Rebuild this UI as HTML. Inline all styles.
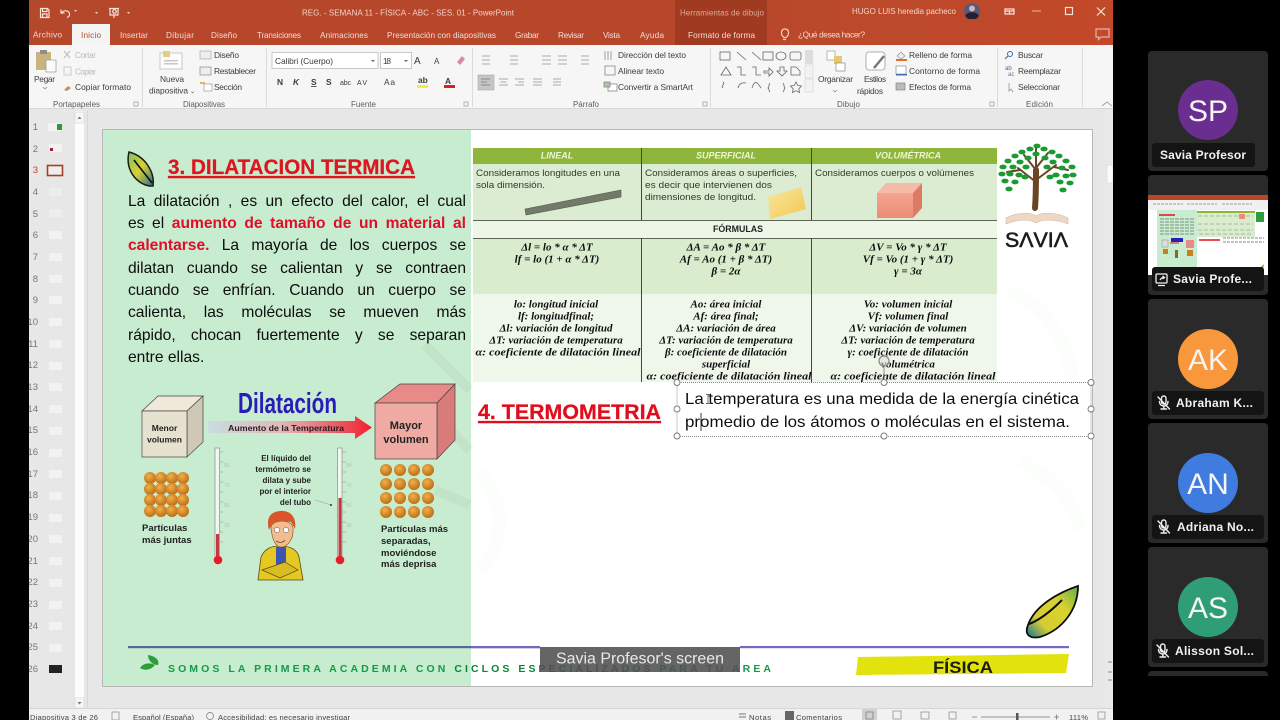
<!DOCTYPE html>
<html lang="es"><head><meta charset="utf-8"><title>PowerPoint - Savia</title>
<style>
html,body{margin:0;padding:0;background:#000;width:1280px;height:720px;overflow:hidden}
svg{display:block;position:absolute;left:0;top:0}
text{font-family:"Liberation Sans",sans-serif}
.tb{font-size:8px;fill:#f3d3c7}
.tab{font-size:8.2px;fill:#f6dcd3}
.r{font-size:8.4px;fill:#3c3c3c}
.g{font-size:8.2px;fill:#bbb}
.lb{font-size:8px;fill:#5c5c5c}
.n{font-size:9.5px;fill:#777;text-anchor:end}
.c{font-size:9.6px;fill:#2c3a2c}
.fx{font-family:"Liberation Serif",serif;font-size:11px;font-weight:bold;font-style:italic;fill:#111;text-anchor:middle}
.h{font-size:9px;font-weight:bold;font-style:italic;fill:#eef5d8;text-anchor:middle}
.b{font-weight:bold;fill:#222}
.st{font-size:7.6px;fill:#444}
.nm{font-size:12px;font-weight:bold;fill:#f1f1f1}
.ini{font-size:30px;fill:#f5f5f5;text-anchor:middle}
.ln{position:absolute;left:0;width:338px;height:22px;font:15.6px/22px "Liberation Sans",sans-serif;color:#0c0c0c;text-align:justify;text-align-last:justify;white-space:nowrap}
.ln b{color:#e0102a}
</style></head><body>
<svg width="1280" height="720" viewBox="0 0 1280 720" xmlns="http://www.w3.org/2000/svg">
<defs>
<filter id="bl" filterUnits="userSpaceOnUse" x="0" y="0" width="1130" height="720"><feGaussianBlur stdDeviation="0.28"/></filter>
<linearGradient id="tit" x1="0" x2="1"><stop offset="0" stop-color="#b5462a"/><stop offset=".62" stop-color="#b7472a"/><stop offset="1" stop-color="#c24a2c"/></linearGradient>
<linearGradient id="arr" x1="0" x2="1"><stop offset="0" stop-color="#c9dde0"/><stop offset=".45" stop-color="#e0b8b8"/><stop offset="1" stop-color="#f31f2f"/></linearGradient>
<linearGradient id="lf" x1="0" y1="0" x2="1" y2="1"><stop offset="0" stop-color="#7cc06a"/><stop offset=".5" stop-color="#d8d033"/><stop offset="1" stop-color="#1f6d9a"/></linearGradient>
<linearGradient id="lf2" x1="1" y1="0" x2="0" y2="1"><stop offset="0" stop-color="#5fae4c"/><stop offset=".35" stop-color="#d9d32e"/><stop offset=".72" stop-color="#d5cc30"/><stop offset="1" stop-color="#14709c"/></linearGradient>
<radialGradient id="ball" cx=".4" cy=".35" r=".7"><stop offset="0" stop-color="#f2b04a"/><stop offset="1" stop-color="#b86a12"/></radialGradient>
<linearGradient id="box" x1="0" y1="0" x2="0" y2="1"><stop offset="0" stop-color="#f2a68f"/><stop offset="1" stop-color="#ee8b78"/></linearGradient>
<linearGradient id="yl" x1="0" y1="0" x2="1" y2="1"><stop offset="0" stop-color="#f8e7a0"/><stop offset="1" stop-color="#f2c84f"/></linearGradient>
<g id="mute" fill="none" stroke="#f0f0f0" stroke-width="1.4" stroke-linecap="round"><rect x="3.5" y="0" width="4.5" height="8" rx="2.2"/><path d="M1.5 5.5c0 6 8.500 6 8.500 0M5.800 10.500V13M3 13h5.500M0 1l11.500 12"/></g>
<ellipse id="l" rx="3.600" ry="2.400" fill="#1f9a30"/>
</defs>

<rect width="1280" height="720" fill="#000"/>

<g filter="url(#bl)">
<!-- window base -->
<rect x="29" y="0" width="1084" height="720" fill="#e7e7e7"/>
<rect x="29" y="0" width="1084" height="45" fill="url(#tit)"/>
<rect x="675" y="0" width="92" height="45" fill="#a03b22"/>
<rect x="72" y="24" width="38" height="22" fill="#f4f4f4"/>
<rect x="29" y="45" width="1084" height="63" fill="#f6f6f6"/>
<rect x="29" y="108" width="1084" height="1" fill="#d6d6d6"/>

<!-- title bar -->
<g fill="none" stroke="#f7e2da" stroke-width="1.2">
<path d="M40.500 8.500h7l1.500 1.500v7.500h-8.500zM42.500 8.500v3h4.500v-3M42.500 17.500v-3.500h4.500v3.500"/>
<path d="M61 9.500v3.500h3.500M61.500 13c2-3 7-3 8 .5 .5 2-1 3.500-2.500 4"/>
<path d="M109 8.500h10M110 8.500v6.500h8v-6.500M114 15v3"/><circle cx="114.500" cy="11.500" r="1.800"/>
<path d="M1005 9h9v5h-9zM1005 11h9M1009.500 11v3"/>
<path d="M1032 11h9" stroke-opacity=".6"/>
<rect x="1065.500" y="7.500" width="7" height="7"/>
<path d="M1097 7.500l8 8M1105 7.500l-8 8"/>
<path d="M1096 29h13v8h-8l-2.500 2.500v-2.500h-2.500z" stroke-opacity=".7"/>
<path d="M784 37.500c-4-3-3-8.500 1-8.500s5 5.500 1 8.500zM783 39.500h3" stroke-opacity=".9"/>
</g>
<path d="M74 10l3 0-1.500 2z M95 12l3 0-1.500 2z M127 12l3 0-1.500 2z" fill="#f3d3c7"/>
<text class="tb" x="302" y="15.500" textLength="212">REG. - SEMANA 11 - FÍSICA - ABC - SES. 01  -  PowerPoint</text>
<text class="tb" x="680" y="15.500" textLength="84" style="fill:#e0a690">Herramientas de dibujo</text>
<text class="tb" x="852" y="14" textLength="104">HUGO LUIS heredia pacheco</text>
<circle cx="972" cy="11" r="8" fill="#59597a"/><circle cx="972" cy="8.500" r="3" fill="#c8b8c0"/><path d="M965 16c2-5 12-5 14 0l-3 3h-8z" fill="#22222e"/>

<!-- tabs -->
<text class="tab" x="33" y="37.500" textLength="29">Archivo</text>
<text class="tab" x="81" y="38" textLength="20" style="fill:#b7472a">Inicio</text>
<text class="tab" x="120" y="38" textLength="28">Insertar</text>
<text class="tab" x="166" y="38" textLength="28">Dibujar</text>
<text class="tab" x="211" y="38" textLength="26">Diseño</text>
<text class="tab" x="257" y="38" textLength="44">Transiciones</text>
<text class="tab" x="320" y="38" textLength="48">Animaciones</text>
<text class="tab" x="387" y="38" textLength="109">Presentación con diapositivas</text>
<text class="tab" x="515" y="38" textLength="24">Grabar</text>
<text class="tab" x="558" y="38" textLength="26">Revisar</text>
<text class="tab" x="603" y="38" textLength="17">Vista</text>
<text class="tab" x="640" y="38" textLength="24">Ayuda</text>
<text class="tab" x="688" y="38" textLength="67">Formato de forma</text>
<text class="tab" x="798" y="37.500" textLength="67">¿Qué desea hacer?</text>

<!-- ribbon separators -->
<g fill="#dcdcdc"><rect x="142" y="48" width="1" height="59"/><rect x="266" y="48" width="1" height="59"/><rect x="472" y="48" width="1" height="59"/><rect x="710" y="48" width="1" height="59"/><rect x="997" y="48" width="1" height="59"/><rect x="1082" y="48" width="1" height="59"/></g>

<!-- Portapapeles -->
<rect x="36" y="52" width="15" height="18" fill="#c9b37e"/><rect x="40" y="50" width="7" height="4" fill="#8d8d8d"/><rect x="46" y="60" width="10" height="12" fill="#fafafa" stroke="#999" stroke-width=".7"/>
<text class="r" x="34" y="82" textLength="21">Pegar</text>
<path d="M43 87l2 2 2-2" fill="none" stroke="#888" stroke-width=".7"/>
<path d="M64 51l6 7M70 51l-6 7" stroke="#bbb" stroke-width="1" fill="none"/><text class="g" x="75" y="58" textLength="21">Cortar</text>
<rect x="64" y="67" width="7" height="8" fill="none" stroke="#ccc"/><text class="g" x="75" y="74.500" textLength="21">Copiar</text>
<path d="M64 90l4-4 3 2-4 3z" fill="#b59a55"/><text class="r" x="75" y="90" textLength="56">Copiar formato</text>
<text class="lb" x="53" y="107" textLength="47">Portapapeles</text>
<rect x="134" y="102" width="4" height="4" fill="none" stroke="#999" stroke-width=".7"/>

<!-- Diapositivas -->
<rect x="160" y="53" width="22" height="16" fill="#fcfcfc" stroke="#bdbdbd" stroke-width=".8"/><rect x="163" y="51" width="7" height="6" fill="#e8cc7a"/><rect x="164" y="60" width="14" height="1.500" fill="#c8c8c8"/><rect x="164" y="63" width="14" height="1.500" fill="#c8c8c8"/>
<text class="r" x="160" y="82" textLength="24">Nueva</text>
<text class="r" x="149" y="93.500" textLength="39">diapositiva</text>
<text class="r" x="190" y="93" style="font-size:6px">⌄</text>
<text class="lb" x="183" y="107" textLength="42">Diapositivas</text>
<rect x="200" y="51" width="11" height="8" fill="#eee" stroke="#aaa" stroke-width=".7"/><text class="r" x="214" y="58" textLength="25">Diseño</text>
<rect x="200" y="67" width="11" height="8" fill="#eee" stroke="#888" stroke-width=".7"/><text class="r" x="214" y="74" textLength="42">Restablecer</text>
<rect x="204" y="84" width="8" height="7" fill="#fff" stroke="#999" stroke-width=".7"/><rect x="200" y="82" width="5" height="2" fill="#e8b060"/><text class="r" x="214" y="90" textLength="28">Sección</text>

<!-- Fuente -->
<rect x="272" y="52.500" width="106" height="16" fill="#fff" stroke="#bcbcbc" stroke-width=".8"/>
<text class="r" x="275" y="64" textLength="58">Calibri (Cuerpo)</text><path d="M371 60l2 2 2-2z" fill="#666"/>
<rect x="380.500" y="52.500" width="31" height="16" fill="#fff" stroke="#bcbcbc" stroke-width=".8"/>
<text class="r" x="383" y="64" textLength="8">18</text><path d="M404 60l2 2 2-2z" fill="#666"/>
<text class="r" x="414" y="64" style="font-size:10px">A</text><text class="r" x="434" y="64" style="font-size:8px">A</text>
<path d="M457 62l5-6 3 3-5 6z" fill="#d98aa0"/>
<text class="r" x="277" y="85" style="font-weight:bold">N</text><text class="r" x="293" y="85" style="font-weight:bold;font-style:italic">K</text>
<text class="r" x="311" y="85" style="font-weight:bold;text-decoration:underline">S</text><text class="r" x="326" y="85" style="font-weight:bold">S</text>
<text class="r" x="340" y="85" textLength="11" style="font-size:7px">abc</text><text class="r" x="357" y="85" textLength="10" style="font-size:7px">AV</text>
<text class="r" x="384" y="85" textLength="11">Aa</text>
<text class="r" x="418" y="83" style="font-weight:bold">ab</text><rect x="417" y="85" width="11" height="3" fill="#f0ee3a"/>
<text class="r" x="445" y="84" style="font-weight:bold">A</text><rect x="444" y="85" width="11" height="3" fill="#d2232a"/>
<text class="lb" x="351" y="107" textLength="25">Fuente</text>
<rect x="464" y="102" width="4" height="4" fill="none" stroke="#999" stroke-width=".7"/>

<!-- Parrafo -->
<g stroke="#aaa" stroke-width="1" fill="none">
<path d="M482 56h8M482 60h8M482 64h8M510 56h8M510 60h8M510 64h8M542 56h9M542 60h9M542 64h9M558 56h9M558 60h9M558 64h9M581 56h8M581 60h8M581 64h8"/>
</g>
<rect x="478" y="75" width="16" height="15" fill="#c6c6c6" stroke="#aaa" stroke-width=".6"/>
<g stroke="#8a8a8a" stroke-width="1" fill="none"><path d="M481 79h9M481 82h6M481 85h9"/></g>
<g stroke="#aaa" stroke-width="1" fill="none"><path d="M499 79h9M500.500 82h6M499 85h9M515 79h9M518 82h6M515 85h9M533 79h9M533 82h9M533 85h9M553 79h8M553 82h8M553 85h8"/></g>
<text class="lb" x="573" y="107" textLength="26">Párrafo</text>
<g stroke="#888" stroke-width=".8" fill="none"><path d="M605 51v9M608 51v9M611 51v9"/><rect x="605" y="66" width="10" height="9"/><rect x="608" y="84" width="9" height="7" fill="#fff"/><rect x="604" y="82" width="6" height="5" fill="#a8c8a0"/></g>
<text class="r" x="618" y="58" textLength="68">Dirección del texto</text>
<text class="r" x="618" y="74" textLength="46">Alinear texto</text>
<text class="r" x="618" y="90" textLength="75">Convertir a SmartArt</text>
<rect x="703" y="102" width="4" height="4" fill="none" stroke="#999" stroke-width=".7"/>

<!-- Dibujo shapes -->
<g stroke="#666" stroke-width=".8" fill="none">
<rect x="720" y="52" width="10" height="8"/><path d="M737 52l9 8M752 52l9 8"/><rect x="763" y="52" width="10" height="8"/><ellipse cx="781" cy="56" rx="5" ry="4"/><rect x="790" y="52" width="11" height="8" rx="2"/>
<path d="M721 75l5-8 5 8zM737 67h4v8h5M752 67h4v8h5M764 71h5v-3l4 4-4 4v-3h-5zM780 67h4v4h3l-5 5-5-5h3zM791 75v-8h5l4 4v4z"/>
<path d="M723 82c3 2-3 4 0 6M738 88c1-4 4-6 8-5M752 88c3-9 5-6 9 0M770 83c-2 2 0 3-2 5 2 1 0 3 2 4M783 83c2 2 0 3 2 5-2 1 0 3-2 4"/>
<path d="M796 82l1.800 3.500 3.700.5-2.700 2.700.7 3.800-3.500-1.800-3.500 1.800.7-3.800-2.700-2.700 3.700-.5z"/>
</g>
<rect x="805" y="50" width="8" height="14" fill="#ddd"/><rect x="805" y="65" width="8" height="13" fill="#f2f2f2" stroke="#ccc" stroke-width=".5"/><rect x="805" y="79" width="8" height="13" fill="#f2f2f2" stroke="#ccc" stroke-width=".5"/>
<rect x="827" y="51" width="8" height="9" fill="#fff" stroke="#999" stroke-width=".7"/><rect x="834" y="56" width="8" height="8" fill="#e6c871"/><rect x="836" y="63" width="9" height="8" fill="#fff" stroke="#888" stroke-width=".7"/>
<text class="r" x="818" y="82" textLength="35">Organizar</text><path d="M833 90l2 2 2-2" fill="none" stroke="#888" stroke-width=".7"/>
<rect x="866" y="52" width="19" height="18" rx="3" fill="#fff" stroke="#999" stroke-width=".8"/><path d="M874 68l10-12" stroke="#777" stroke-width="2.500"/>
<text class="r" x="864" y="82" textLength="22">Estilos</text><text class="r" x="857" y="94" textLength="26">rápidos</text>
<path d="M897 56l4-4 4 4-4 3z" fill="#eee" stroke="#888" stroke-width=".6"/><rect x="896" y="59" width="11" height="2" fill="#e46c2b"/>
<rect x="896" y="66" width="10" height="8" fill="#fff" stroke="#888" stroke-width=".7"/><rect x="896" y="74" width="11" height="1.500" fill="#3f6fb0"/>
<rect x="896" y="83" width="9" height="7" fill="#bbb" stroke="#777" stroke-width=".6"/>
<text class="r" x="909" y="58" textLength="63">Relleno de forma</text><text class="r" x="909" y="74" textLength="71">Contorno de forma</text><text class="r" x="909" y="90" textLength="62">Efectos de forma</text>
<text class="lb" x="837" y="107" textLength="23">Dibujo</text>
<rect x="990" y="102" width="4" height="4" fill="none" stroke="#999" stroke-width=".7"/>
<!-- Edicion -->
<circle cx="1010" cy="54" r="2.500" fill="none" stroke="#3b6db5"/><path d="M1008 56l-3 3" stroke="#3b6db5" stroke-width="1.200"/>
<text x="1005" y="70" style="font-size:6px;fill:#3b6db5">ab</text><text x="1008" y="76" style="font-size:6px;fill:#777">ac</text>
<path d="M1009 83v8l2-2 2 3" fill="none" stroke="#888" stroke-width=".7"/>
<text class="r" x="1018" y="58" textLength="25">Buscar</text><text class="r" x="1018" y="74" textLength="43">Reemplazar</text><text class="r" x="1018" y="90" textLength="42">Seleccionar</text>
<text class="lb" x="1026" y="107" textLength="27">Edición</text>
<path d="M1102 106l5-4 5 4" fill="none" stroke="#888" stroke-width=".8"/>

<!-- thumbnails panel -->
<rect x="75" y="111" width="9" height="597" fill="#fcfcfc"/>
<rect x="75" y="112" width="9" height="11" fill="#f6f6f6" stroke="#ccc" stroke-width=".5"/><path d="M77.500 119l2-2.500 2 2.500z" fill="#777"/>
<rect x="75" y="698" width="9" height="10" fill="#f6f6f6" stroke="#ccc" stroke-width=".5"/><path d="M77.500 702l2 2.500 2-2.500z" fill="#777"/>
<rect x="87" y="111" width="1" height="597" fill="#d6d6d6"/>
<g>
<text class="n" x="38" y="130">1</text><text class="n" x="38" y="152">2</text><text class="n" x="38" y="173" style="fill:#b7472a">3</text><text class="n" x="38" y="195">4</text><text class="n" x="38" y="217">5</text><text class="n" x="38" y="238">6</text><text class="n" x="38" y="260">7</text><text class="n" x="38" y="282">8</text><text class="n" x="38" y="303">9</text><text class="n" x="38" y="325">10</text><text class="n" x="38" y="347">11</text><text class="n" x="38" y="368">12</text><text class="n" x="38" y="390">13</text><text class="n" x="38" y="412">14</text><text class="n" x="38" y="433">15</text><text class="n" x="38" y="455">16</text><text class="n" x="38" y="477">17</text><text class="n" x="38" y="498">18</text><text class="n" x="38" y="520">19</text><text class="n" x="38" y="542">20</text><text class="n" x="38" y="564">21</text><text class="n" x="38" y="585">22</text><text class="n" x="38" y="607">23</text><text class="n" x="38" y="629">24</text><text class="n" x="38" y="650">25</text><text class="n" x="38" y="672">26</text>
</g>
<g fill="#f2f2f2">
<rect x="48" y="123" width="13" height="8"/><rect x="49" y="144" width="13" height="8"/><rect x="49" y="188" width="13" height="8" opacity=".6"/><rect x="49" y="209" width="13" height="8" opacity=".6"/><rect x="49" y="231" width="13" height="8"/><rect x="49" y="253" width="13" height="8"/><rect x="49" y="275" width="13" height="8"/><rect x="49" y="296" width="13" height="8"/><rect x="49" y="318" width="13" height="8"/><rect x="49" y="340" width="13" height="8"/><rect x="49" y="362" width="13" height="8"/><rect x="49" y="383" width="13" height="8"/><rect x="49" y="405" width="13" height="8"/><rect x="49" y="427" width="13" height="8"/><rect x="49" y="449" width="13" height="8"/><rect x="49" y="470" width="13" height="8"/><rect x="49" y="492" width="13" height="8"/><rect x="49" y="514" width="13" height="8"/><rect x="49" y="535" width="13" height="8"/><rect x="49" y="557" width="13" height="8"/><rect x="49" y="579" width="13" height="8"/><rect x="49" y="601" width="13" height="8"/><rect x="49" y="622" width="13" height="8"/><rect x="49" y="644" width="13" height="8"/>
</g>
<rect x="57" y="124" width="5" height="6" fill="#2a9a3a"/><rect x="50" y="148" width="3" height="3" fill="#a02030"/>
<rect x="47.500" y="165.500" width="15" height="10" fill="#eee" stroke="#a3402a" stroke-width="1.600"/>
<rect x="49" y="665" width="13" height="8" fill="#222"/>

<!-- right scrollbar -->
<rect x="1105" y="111" width="8" height="597" fill="#e9e9e9"/><rect x="1107" y="165" width="6" height="18" fill="#fbfbfb" stroke="#ccc" stroke-width=".5"/>
<path d="M1108 662h4M1108 672h4M1108 680h4" stroke="#888" stroke-width="1"/>

<!-- SLIDE -->
<rect x="102" y="129" width="991" height="558" fill="#b8b8b8"/>
<rect x="103" y="130" width="989" height="556" fill="#ffffff"/>
<rect x="103" y="130" width="368" height="556" fill="#c8eccf"/>
<g fill="none" stroke="#9aa89a" stroke-width="10" opacity=".12"><path d="M425 345l45 45M440 420l30 30M435 490l35 15"/></g>
<g fill="none" stroke="#dcefdc" stroke-width="14" opacity=".09"><path d="M1010 290c40 20 70 60 60 120M1020 460c30 20 50 30 60 70M480 470c30 40 20 80 0 100"/></g>

<!-- heading 3 -->
<path d="M129 152C145 156 155 172 153 186C140 187 124 172 129 152Z" fill="url(#lf)" stroke="#1a1a10" stroke-width="1.500"/>
<path d="M134 160C140 168 146 175 152 183" stroke="#111" stroke-width="1.600" fill="none"/>
<text x="168" y="174" textLength="247" lengthAdjust="spacingAndGlyphs" style="font-size:21px;font-weight:bold;fill:#dd1520;stroke:#dd1520;stroke-width:.25;text-decoration:underline">3. DILATACION TERMICA</text>

<!-- body -->
<foreignObject x="128" y="188" width="345" height="184">
<div xmlns="http://www.w3.org/1999/xhtml" style="position:relative;width:345px;height:184px">
<div class="ln" style="top:2.500px">La dilatación , es un efecto del calor, el cual</div>
<div class="ln" style="top:24.500px">es el <b>aumento de tamaño de un material al</b></div>
<div class="ln" style="top:47px"><b>calentarse.</b> La mayoría de los cuerpos se</div>
<div class="ln" style="top:69.500px">dilatan cuando se calientan y se contraen</div>
<div class="ln" style="top:91.500px">cuando se enfrían. Cuando un cuerpo se</div>
<div class="ln" style="top:114px">calienta, las moléculas se mueven más</div>
<div class="ln" style="top:136.500px">rápido, chocan fuertemente y se separan</div>
<div class="ln" style="top:158.500px;text-align-last:left">entre ellas.</div>
</div></foreignObject>

<!-- table -->
<rect x="473" y="148" width="524" height="16" fill="#8fb63a"/>
<rect x="473" y="164" width="524" height="56" fill="#dcecd2"/>
<rect x="473" y="221" width="524" height="17" fill="#eef6e8"/>
<rect x="473" y="239" width="524" height="55" fill="#d9eccd"/>
<rect x="473" y="294" width="524" height="88" fill="#eff7ea"/>
<g fill="#3e4a3a"><rect x="641" y="148" width="1" height="72"/><rect x="811" y="148" width="1" height="72"/><rect x="641" y="238" width="1" height="144"/><rect x="811" y="238" width="1" height="144"/><rect x="473" y="220" width="524" height="1" opacity=".85"/><rect x="473" y="238" width="524" height="1" opacity=".85"/></g>
<text class="h" x="557" y="158.500">LINEAL</text><text class="h" x="726" y="158.500">SUPERFICIAL</text><text class="h" x="908" y="158.500">VOLUMÉTRICA</text>
<text class="c" x="476" y="176" textLength="144" lengthAdjust="spacingAndGlyphs">Consideramos longitudes en una</text>
<text class="c" x="476" y="188" textLength="69" lengthAdjust="spacingAndGlyphs">sola dimensión.</text>
<text class="c" x="645" y="176" textLength="152" lengthAdjust="spacingAndGlyphs">Consideramos áreas o superficies,</text>
<text class="c" x="645" y="188" textLength="127" lengthAdjust="spacingAndGlyphs">es decir que intervienen dos</text>
<text class="c" x="645" y="200" textLength="111" lengthAdjust="spacingAndGlyphs">dimensiones de longitud.</text>
<text class="c" x="815" y="176" textLength="159" lengthAdjust="spacingAndGlyphs">Consideramos cuerpos o volúmenes</text>
<path d="M525 209L621 190V197L526 215Z" fill="#737a6a" stroke="#4e564a" stroke-width=".6"/>
<path d="M768 197L801 187L806 209L770 219Z" fill="url(#yl)"/>
<path d="M877 193H913L922 183H886Z" fill="#f6bba8"/><path d="M913 193L922 183V208L913 218Z" fill="#dd7a66"/><rect x="877" y="193" width="36" height="25" fill="url(#box)"/>
<text x="713" y="232" style="font-size:9px;font-weight:bold;fill:#222" textLength="50" lengthAdjust="spacingAndGlyphs">FÓRMULAS</text>

<text class="fx" x="557" y="250.500">Δl = lo * α * ΔT</text><text class="fx" x="557" y="262.500">lf = lo (1 + α * ΔT)</text>
<text class="fx" x="726" y="250.500">ΔA = Ao * β * ΔT</text><text class="fx" x="726" y="262.500">Af = Ao (1 + β * ΔT)</text><text class="fx" x="726" y="274.500">β = 2α</text>
<text class="fx" x="908" y="250.500">ΔV = Vo * γ * ΔT</text><text class="fx" x="908" y="262.500">Vf = Vo (1 + γ * ΔT)</text><text class="fx" x="908" y="274.500">γ = 3α</text>

<text class="fx" x="556" y="307.500">lo: longitud inicial</text>
<text class="fx" x="556" y="319.500">lf: longitudfinal;</text>
<text class="fx" x="556" y="331.500">Δl: variación de longitud</text>
<text class="fx" x="556" y="343.500">ΔT: variación de temperatura</text>
<text class="fx" x="558" y="355.500" textLength="165" lengthAdjust="spacingAndGlyphs">α: coeficiente de dilatación lineal</text>

<text class="fx" x="726" y="307.500">Ao: área inicial</text>
<text class="fx" x="726" y="319.500">Af: área final;</text>
<text class="fx" x="726" y="331.500">ΔA: variación de área</text>
<text class="fx" x="726" y="343.500">ΔT: variación de temperatura</text>
<text class="fx" x="726" y="355.500">β: coeficiente de dilatación</text>
<text class="fx" x="726" y="367.500">superficial</text>
<text class="fx" x="729" y="379.500" textLength="165" lengthAdjust="spacingAndGlyphs">α: coeficiente de dilatación lineal</text>

<text class="fx" x="908" y="307.500">Vo: volumen inicial</text>
<text class="fx" x="908" y="319.500">Vf: volumen final</text>
<text class="fx" x="908" y="331.500">ΔV: variación de volumen</text>
<text class="fx" x="908" y="343.500">ΔT: variación de temperatura</text>
<text class="fx" x="908" y="355.500">γ: coeficiente de dilatación</text>
<text class="fx" x="908" y="367.500">volumétrica</text>
<text class="fx" x="913" y="379.500" textLength="165" lengthAdjust="spacingAndGlyphs">α: coeficiente de dilatación lineal</text>

<!-- logo -->
<g stroke="#6b4424" fill="none" stroke-linecap="round">
<path d="M1035 208C1036 195 1036 185 1036 170" stroke-width="6"/>
<path d="M1036 182L1018 168M1036 180L1056 165M1036 170L1024 155M1036 168L1048 153M1036 172V148M1020 170L1007 172M1054 167L1068 170" stroke-width="2"/>
</g>
<g>
<use href="#l" x="1037" y="146"/><use href="#l" x="1030" y="149"/><use href="#l" x="1044" y="149"/><use href="#l" x="1022" y="152"/><use href="#l" x="1052" y="152"/><use href="#l" x="1036" y="154"/><use href="#l" x="1015" y="156"/><use href="#l" x="1059" y="156"/><use href="#l" x="1028" y="158"/><use href="#l" x="1045" y="158"/><use href="#l" x="1008" y="161"/><use href="#l" x="1066" y="161"/><use href="#l" x="1020" y="162"/><use href="#l" x="1053" y="162"/><use href="#l" x="1003" y="167"/><use href="#l" x="1072" y="167"/><use href="#l" x="1013" y="167"/><use href="#l" x="1062" y="168"/><use href="#l" x="1026" y="167"/><use href="#l" x="1047" y="167"/><use href="#l" x="1002" y="174"/><use href="#l" x="1073" y="175"/><use href="#l" x="1010" y="174"/><use href="#l" x="1066" y="176"/><use href="#l" x="1019" y="175"/><use href="#l" x="1056" y="175"/><use href="#l" x="1005" y="181"/><use href="#l" x="1070" y="183"/><use href="#l" x="1015" y="182"/><use href="#l" x="1060" y="182"/><use href="#l" x="1025" y="177"/><use href="#l" x="1050" y="177"/><use href="#l" x="1009" y="189"/><use href="#l" x="1063" y="190"/>
</g>
<path d="M1006 218C1018 212 1030 212 1036 216C1042 212 1056 212 1068 218V224C1056 219 1042 219 1036 223C1030 219 1018 219 1006 224Z" fill="#ecd9c5" stroke="#d8b89a" stroke-width=".6"/>
<text x="1005" y="247" textLength="63" lengthAdjust="spacingAndGlyphs" style="font-size:21px;fill:#1c1c1c;stroke:#1c1c1c;stroke-width:.6">SΛVIΛ</text>

<!-- illustration -->
<path d="M142 411L158 396H203L187 411Z" fill="#efe9da" stroke="#444" stroke-width=".7"/><path d="M187 411L203 396V442L187 457Z" fill="#cfc8b6" stroke="#444" stroke-width=".7"/><rect x="142" y="411" width="45" height="46" fill="#e7e1d0" stroke="#444" stroke-width=".7"/>
<text class="b" x="164.500" y="431" text-anchor="middle" style="font-size:8.500px">Menor</text><text class="b" x="164.500" y="442.500" text-anchor="middle" style="font-size:8.500px">volumen</text>
<text x="238" y="413" textLength="99" lengthAdjust="spacingAndGlyphs" style="font-size:29px;font-weight:bold;fill:#2a1fb8">Dilatación</text>
<path d="M208 421H355V416L372 427.500L355 439V433H208Z" fill="url(#arr)"/>
<text class="b" x="228" y="431" textLength="116" lengthAdjust="spacingAndGlyphs" style="font-size:8.500px;fill:#2b1a20">Aumento de la Temperatura</text>
<path d="M375 403L400 384H455L437 403Z" fill="#e88b88" stroke="#444" stroke-width=".7"/><path d="M437 403L455 384V440L437 459Z" fill="#d77c7a" stroke="#444" stroke-width=".7"/><rect x="375" y="403" width="62" height="56" fill="#efaaa4" stroke="#444" stroke-width=".7"/>
<text class="b" x="406" y="429" text-anchor="middle" style="font-size:11px">Mayor</text><text class="b" x="406" y="443" text-anchor="middle" style="font-size:11px">volumen</text>
<!-- thermometers -->
<rect x="215" y="448" width="4.500" height="110" fill="#f0f7f0" stroke="#8b8b8b" stroke-width=".7"/><rect x="216" y="534" width="3" height="24" fill="#c03a40"/><circle cx="218" cy="560" r="4.300" fill="#e51b2a"/>
<rect x="337.500" y="448" width="4.500" height="110" fill="#f0f7f0" stroke="#8b8b8b" stroke-width=".7"/><rect x="338.500" y="498" width="3" height="60" fill="#c03a40"/><circle cx="340" cy="560" r="4.300" fill="#e51b2a"/>
<g stroke="#b5b5b5" stroke-width="1"><path d="M219 452h4M219 462h4M219 472h4M219 482h4M219 492h4M219 502h4M219 512h4M219 522h4M219 532h4M219 542h4M342 452h4M342 462h4M342 472h4M342 482h4M342 492h4M342 502h4M342 512h4M342 522h4M342 532h4M342 542h4"/></g>
<g style="font-size:5px" fill="#bbb"><text x="224" y="467">90</text><text x="224" y="487">70</text><text x="224" y="507">50</text><text x="224" y="527">30</text><text x="346" y="467">90</text><text x="346" y="487">70</text><text x="346" y="507">50</text><text x="346" y="527">30</text></g>
<!-- balls -->
<g fill="url(#ball)">
<circle cx="150" cy="478" r="6"/><circle cx="161" cy="478" r="6"/><circle cx="172" cy="478" r="6"/><circle cx="183" cy="478" r="6"/><circle cx="150" cy="489" r="6"/><circle cx="161" cy="489" r="6"/><circle cx="172" cy="489" r="6"/><circle cx="183" cy="489" r="6"/><circle cx="150" cy="500" r="6"/><circle cx="161" cy="500" r="6"/><circle cx="172" cy="500" r="6"/><circle cx="183" cy="500" r="6"/><circle cx="150" cy="511" r="6"/><circle cx="161" cy="511" r="6"/><circle cx="172" cy="511" r="6"/><circle cx="183" cy="511" r="6"/>
<circle cx="386" cy="470" r="6"/><circle cx="400" cy="470" r="6"/><circle cx="414" cy="470" r="6"/><circle cx="428" cy="470" r="6"/><circle cx="386" cy="484" r="6"/><circle cx="400" cy="484" r="6"/><circle cx="414" cy="484" r="6"/><circle cx="428" cy="484" r="6"/><circle cx="386" cy="498" r="6"/><circle cx="400" cy="498" r="6"/><circle cx="414" cy="498" r="6"/><circle cx="428" cy="498" r="6"/><circle cx="386" cy="512" r="6"/><circle cx="400" cy="512" r="6"/><circle cx="414" cy="512" r="6"/><circle cx="428" cy="512" r="6"/>
</g>
<text x="142" y="531" style="font-size:9.500px;font-weight:bold;fill:#222">Partículas</text><text x="142" y="543" style="font-size:9.500px;font-weight:bold;fill:#222">más juntas</text>
<text x="381" y="532" style="font-size:9.500px;font-weight:bold;fill:#222">Partículas más</text><text x="381" y="544" style="font-size:9.500px;font-weight:bold;fill:#222">separadas,</text><text x="381" y="556" style="font-size:9.500px;font-weight:bold;fill:#222">moviéndose</text><text x="381" y="567" style="font-size:9.500px;font-weight:bold;fill:#222">más deprisa</text>
<g text-anchor="end">
<text x="311" y="461" style="fill:#222;font-size:8px;font-weight:bold">El líquido del</text><text x="311" y="472" style="fill:#222;font-size:8px;font-weight:bold">termómetro se</text><text x="311" y="483" style="fill:#222;font-size:8px;font-weight:bold">dilata y sube</text><text x="311" y="494" style="fill:#222;font-size:8px;font-weight:bold">por el interior</text><text x="311" y="505" style="fill:#222;font-size:8px;font-weight:bold">del tubo</text>
</g>
<path d="M315 500l16 5" stroke="#999" stroke-width=".6"/><circle cx="331" cy="505" r="1" fill="#333"/>
<!-- cartoon -->
<path d="M258 580L261 557C265 548 272 546 280 546C290 546 297 549 299 557L303 580Z" fill="#e5c824" stroke="#5a4a10" stroke-width=".8"/>
<path d="M276 547H286L286 572H276Z" fill="#3a57b0"/>
<path d="M262 570L285 562L298 570L280 578Z" fill="#d9bb22" stroke="#5a4a10" stroke-width=".7"/>
<path d="M271 528C270 520 292 518 293 528C294 540 287 547 281 547C275 547 272 538 271 528Z" fill="#f2bd8e" stroke="#7a4a28" stroke-width=".6"/>
<path d="M269 530C266 518 270 512 280 511C290 510 297 517 295 529L291 522C285 521 276 521 272 524Z" fill="#d9562a"/>
<circle cx="277" cy="530" r="2.600" fill="#fff" stroke="#555" stroke-width=".5"/><circle cx="286" cy="530" r="2.600" fill="#fff" stroke="#555" stroke-width=".5"/><path d="M276 541c3 2 7 2 9-1" stroke="#7a3a20" fill="none" stroke-width=".8"/>

<!-- termometria -->
<rect x="472" y="383" width="620" height="54" fill="#fff"/>
<text x="478" y="419" textLength="183" lengthAdjust="spacingAndGlyphs" style="font-size:21px;font-weight:bold;fill:#e0101e;stroke:#e0101e;stroke-width:.25;text-decoration:underline">4. TERMOMETRIA</text>
<text x="685" y="404" textLength="394" lengthAdjust="spacingAndGlyphs" style="font-size:15.800px;fill:#111">La temperatura es una medida de la energía cinética</text>
<text x="685" y="427" textLength="385" lengthAdjust="spacingAndGlyphs" style="font-size:15.800px;fill:#111">promedio de los átomos o moléculas en el sistema.</text>
<rect x="677" y="382.500" width="414" height="54" fill="none" stroke="#666" stroke-width=".7" stroke-dasharray="1 1"/>
<g fill="#fff" stroke="#777" stroke-width=".9"><circle cx="677" cy="382.500" r="3"/><circle cx="884" cy="382.500" r="3"/><circle cx="1091" cy="382.500" r="3"/><circle cx="677" cy="409" r="3"/><circle cx="1091" cy="409" r="3"/><circle cx="677" cy="436" r="3"/><circle cx="884" cy="436" r="3"/><circle cx="1091" cy="436" r="3"/></g>
<path d="M884 366v14" stroke="#777" stroke-width=".8"/><circle cx="884" cy="361" r="5" fill="#ddd" fill-opacity=".5" stroke="#888" stroke-width="1.200"/>
<path d="M701 413v18" stroke="#222" stroke-width=".9"/>
<path d="M706 394.500h4M706 403.500h4M708 394.500v9" stroke="#666" stroke-width=".9"/>

<!-- footer -->
<path d="M1078 586C1060 592 1035 605 1028 625C1024 635 1030 639 1040 637C1062 630 1078 610 1078 586Z" fill="url(#lf2)" stroke="#111" stroke-width="1.800"/>
<path d="M1029 624C1040 620 1052 610 1062 600" stroke="#111" stroke-width="2" fill="none"/>
<rect x="128" y="646" width="412" height="2.200" fill="#56689a"/><rect x="471" y="646" width="69" height="2.200" fill="#7469bf"/><rect x="740" y="646" width="329" height="2.200" fill="#7469bf"/>
<path d="M148 655C155 656 160 660 158 665C152 665 148 660 148 655ZM140 668C143 663 150 662 155 665C151 670 145 671 140 668Z" fill="#2f9d3e"/>
<text x="168" y="672" textLength="603" style="font-size:10.500px;font-weight:bold;fill:#159a44">SOMOS LA PRIMERA ACADEMIA CON <tspan style="fill:#0b8535">CICLOS ESPECIALIZADOS</tspan> PARA TU AREA</text>
<path d="M858 657L1069 654L1066 673L856 675Z" fill="#e2e20a"/>
<text x="933" y="673" textLength="60" lengthAdjust="spacingAndGlyphs" style="font-size:17px;font-weight:bold;fill:#1e1e0a">FÍSICA</text>

<!-- status bar -->
<rect x="29" y="708" width="1084" height="12" fill="#f1f1f1"/><rect x="29" y="708" width="1084" height=".8" fill="#cfcfcf"/>
<text class="st" x="30" y="720" textLength="68">Diapositiva 3 de 26</text>
<rect x="112" y="712" width="7" height="8" fill="none" stroke="#888" stroke-width=".7"/>
<text class="st" x="133" y="720" textLength="61">Español (España)</text>
<circle cx="210" cy="716" r="3.500" fill="none" stroke="#777" stroke-width=".7"/>
<text class="st" x="218" y="720" textLength="132">Accesibilidad: es necesario investigar</text>
<text class="st" x="749" y="720" textLength="22">Notas</text><path d="M739 714h7M739 717h7" stroke="#777"/>
<rect x="785" y="711" width="9" height="9" fill="#666"/><text class="st" x="796" y="720" textLength="46">Comentarios</text>
<rect x="862" y="709" width="15" height="11" fill="#d0d0d0"/><rect x="866" y="712" width="7" height="7" fill="none" stroke="#777" stroke-width=".7"/>
<rect x="893" y="711" width="8" height="8" fill="none" stroke="#888" stroke-width=".7"/><rect x="921" y="712" width="8" height="7" fill="none" stroke="#888" stroke-width=".7"/><rect x="949" y="712" width="7" height="7" fill="none" stroke="#888" stroke-width=".7"/>
<path d="M972 717h5M981 717h69M1054 717h5M1056.500 714.500v5" stroke="#777" stroke-width=".8"/><rect x="1016" y="713" width="2.500" height="7" fill="#555"/>
<text class="st" x="1069" y="720" textLength="19">111%</text><rect x="1098" y="712" width="7" height="7" fill="none" stroke="#888" stroke-width=".7"/>
</g>
<rect x="0" y="0" width="29" height="720" fill="#000"/>
<rect x="1113" y="0" width="35" height="720" fill="#000"/>

<!-- caption overlay -->
<rect x="540" y="647" width="200" height="25" fill="#505050" fill-opacity=".88"/>
<text x="556" y="663.500" textLength="168" lengthAdjust="spacingAndGlyphs" style="font-size:15.500px;fill:#e9e9e9">Savia Profesor's screen</text>

<!-- participants -->
<g fill="#2a2a2a">
<rect x="1148" y="51" width="120" height="120" rx="4"/><rect x="1148" y="175" width="120" height="120" rx="4"/><rect x="1148" y="299" width="120" height="120" rx="4"/><rect x="1148" y="423" width="120" height="120" rx="4"/><rect x="1148" y="547" width="120" height="120" rx="4"/><path d="M1148 676v-1a4 4 0 0 1 4-4h112a4 4 0 0 1 4 4v1z"/>
</g>
<circle cx="1208" cy="110" r="30" fill="#6a2d90"/><text class="ini" x="1208" y="121">SP</text>
<rect x="1152" y="143" width="103" height="24" rx="3" fill="#141414"/><text class="nm" x="1160" y="159" textLength="86">Savia Profesor</text>

<!-- mini screen -->
<rect x="1148" y="195" width="120" height="80" fill="#fff"/>
<rect x="1148" y="195" width="120" height="5" fill="#b7472a"/>
<rect x="1148" y="200" width="120" height="10" fill="#f0f0f0"/>
<path d="M1153 204h30M1187 204h30M1222 204h30" stroke="#bbb" stroke-width="1.500" stroke-dasharray="3 1"/>
<rect x="1157" y="210" width="40" height="57" fill="#c8eccf"/>
<rect x="1197" y="211" width="58" height="26" fill="#d9eccd"/><rect x="1197" y="211" width="58" height="2" fill="#8fb63a"/>
<g opacity=".6"><path d="M1198 216h55M1198 224h55M1198 230h55M1199 234h54" stroke="#8a9a80" stroke-width="1" stroke-dasharray="4 2"/></g>
<rect x="1239" y="214" width="6" height="5" fill="#ee8b78"/>
<rect x="1256" y="212" width="8" height="10" fill="#2e9e3a"/>
<path d="M1159 215h16" stroke="#dd1520" stroke-width="1.500"/><g opacity=".55"><path d="M1160 219h34M1160 222h34M1160 225h34M1160 228h34M1160 231h34M1160 234h34" stroke="#444" stroke-width=".9" stroke-dasharray="4 1"/></g>
<rect x="1162" y="240" width="6" height="7" fill="#ddd" stroke="#777" stroke-width=".4"/><rect x="1171" y="238" width="12" height="4" fill="#2a1fb8"/><path d="M1170 243h9" stroke="#e51b2a"/><rect x="1186" y="240" width="8" height="8" fill="#e88b88"/>
<rect x="1163" y="249" width="5" height="5" fill="#c8801f"/><rect x="1187" y="250" width="6" height="6" fill="#c8801f"/><rect x="1175" y="250" width="3" height="8" fill="#8a6a20"/>
<path d="M1199 240h21" stroke="#e01020" stroke-width="1.500"/><path d="M1223 238h41M1223 242h41" stroke="#888" stroke-width=".9" stroke-dasharray="3 1"/>
<path d="M1258 270l6-6-1 5z" fill="#6a9a22"/>
<rect x="1152" y="267" width="112" height="24" rx="3" fill="#141414"/>
<g fill="none" stroke="#f0f0f0" stroke-width="1.300"><rect x="1156" y="274" width="11" height="9" rx="1"/><path d="M1158 285.500h7M1160 280c1-2 2-2.500 4-2.500M1162.500 276l2 1.500-2 1.500"/></g>
<text class="nm" x="1173" y="283" textLength="79">Savia Profe...</text>

<circle cx="1208" cy="359" r="30" fill="#f9973c"/><text class="ini" x="1208" y="370">AK</text>
<rect x="1152" y="391" width="112" height="24" rx="3" fill="#141414"/><use href="#mute" x="1158" y="396"/><text class="nm" x="1176" y="407" textLength="77">Abraham K...</text>
<circle cx="1208" cy="483" r="30" fill="#407be0"/><text class="ini" x="1208" y="494">AN</text>
<rect x="1152" y="515" width="112" height="24" rx="3" fill="#141414"/><use href="#mute" x="1158" y="520"/><text class="nm" x="1177" y="531" textLength="77">Adriana No...</text>
<circle cx="1208" cy="607" r="30" fill="#2f9e77"/><text class="ini" x="1208" y="618">AS</text>
<rect x="1152" y="639" width="112" height="24" rx="3" fill="#141414"/><use href="#mute" x="1157" y="644"/><text class="nm" x="1175" y="655" textLength="79">Alisson Sol...</text>
</svg>
</body></html>
